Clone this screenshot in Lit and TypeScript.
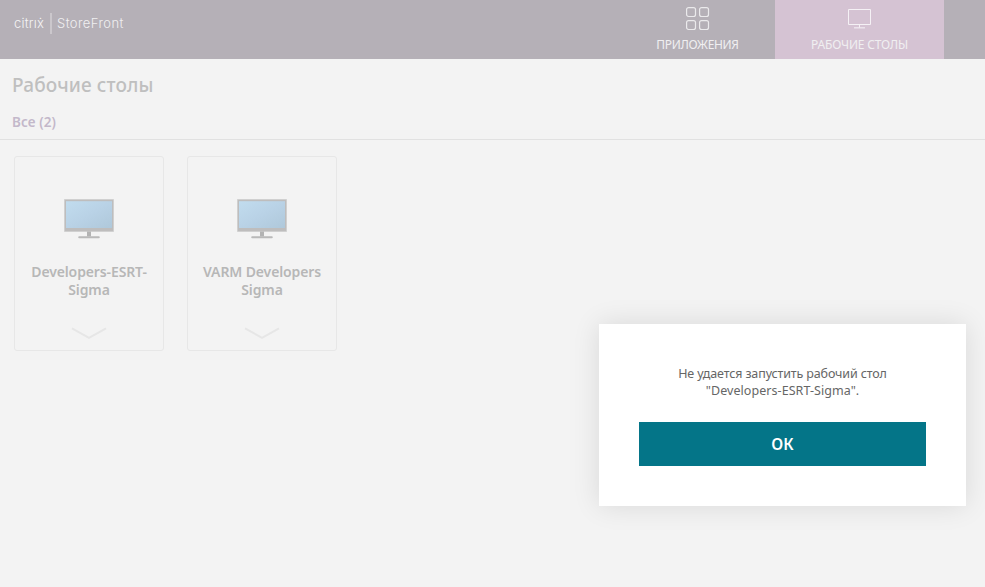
import { LitElement, html, css, svg } from "lit";
import { customElement, property } from "lit/decorators.js";

@customElement("desktop-card")
class DesktopCard extends LitElement {
  @property({ attribute: false }) lines: string[] = [];

  static styles = css`
    :host {
      display: flex;
      flex-direction: column;
      align-items: center;
      box-sizing: border-box;
      width: 150px;
      height: 195px;
      padding-top: 41px;
      border: 1px solid #e7e7e7;
      border-radius: 3px;
    }
    .monitor { display: block; width: 52px; height: 43px; }
    .name {
      margin-top: 22px;
      font: 600 14px/18px "Noto Sans", "Open Sans", sans-serif;
      letter-spacing: -0.12px;
      color: #b7b7b7;
      text-align: center;
      white-space: nowrap;
    }
    .chevron { display: block; margin-top: 28px; width: 36px; height: 12px; }
  `;

  render() {
    return html`
      <svg class="monitor" viewBox="0 0 52 43">
        <defs>
          <linearGradient id="screen" x1="0" y1="0" x2="1" y2="1">
            <stop offset="0" stop-color="#c1dcee" />
            <stop offset="0.5" stop-color="#b9d2e6" />
            <stop offset="1" stop-color="#afc8da" />
          </linearGradient>
        </defs>
        <rect x="1" y="1" width="50" height="33" rx="0.8" fill="#d0d0d0" />
        <rect x="2" y="2" width="48" height="31" fill="#bebdbd" />
        <rect x="3" y="3.2" width="46" height="26.8" fill="url(#screen)" />
        <rect x="24" y="33.5" width="4" height="5" fill="#b3b3b3" />
        <rect x="15.2" y="38.2" width="21.6" height="2.1" rx="1" fill="#b9b9b9" />
      </svg>
      <div class="name">${this.lines.map((l) => html`<div>${l}</div>`)}</div>
      <svg class="chevron" viewBox="0 0 36 12">
        <path d="M1 1.3 L18 10.8 L35 1.3" fill="none" stroke="#e6e6e6" stroke-width="1.9" />
      </svg>
    `;
  }
}

@customElement("app-root")
class AppRoot extends LitElement {
  static styles = css`
    :host {
      display: block;
      position: relative;
      width: 985px;
      height: 587px;
      overflow: hidden;
      background: #f3f3f3;
      font-family: "Noto Sans", "Open Sans", sans-serif;
    }
    header {
      display: flex;
      height: 59px;
      padding-right: 41px;
      background: #b5b0b7;
      color: #f0eff1;
    }
    .brand {
      display: flex;
      align-items: center;
      height: 20px;
      margin: 13px auto 0 14px;
      font: 300 13px/18px Inter, sans-serif;
      white-space: nowrap;
    }
    .citrix { width: 30px; letter-spacing: 0.2px; color: #f4f3f4; }
    .bar { width: 2px; height: 21px; margin: 0 5px 0 6px; background: #cbc7cc; }
    .product { letter-spacing: 0.42px; }
    .tab {
      display: flex;
      flex-direction: column;
      align-items: center;
      width: 155px;
      font-size: 12px;
      line-height: 16px;
      white-space: nowrap;
    }
    .tab.active { width: 169px; background: #d5c3d3; }
    .tab svg { display: block; width: 26px; height: 26px; margin: 6px 0 5px; }
    .apps span { letter-spacing: -0.32px; }
    .active span { letter-spacing: -0.2px; }
    .active svg { align-self: flex-start; margin-left: 71px; }
    h1 {
      margin: 0;
      padding: 13px 12px 0;
      font-size: 19px;
      line-height: 26px;
      font-weight: 500;
      color: #bfbfbf;
      letter-spacing: 0.12px;
    }
    .filter {
      height: 26px;
      padding: 15px 12px 0;
      border-bottom: 1px solid #e1e1e1;
      font-size: 13.5px;
      line-height: 19px;
      font-weight: 650;
      color: #c3b8ca;
      letter-spacing: 0.1px;
    }
    .cards { display: flex; gap: 23px; padding: 16px 14px; }
    .dialog {
      position: absolute;
      left: 599px;
      top: 324px;
      box-sizing: border-box;
      width: 367px;
      height: 182px;
      padding: 41px 40px 40px;
      background: #fff;
      box-shadow: 0 0 26px rgba(0, 0, 0, 0.11);
      text-align: center;
      color: #666;
      font-size: 12.5px;
      line-height: 17px;
    }
    .message { margin: 0 0 23px; white-space: nowrap; }
    .message .subject { letter-spacing: -0.13px; }
    .message .target { letter-spacing: 0.06px; }
    button {
      display: block;
      width: 287px;
      height: 44px;
      padding: 0;
      border: 0;
      background: #047588;
      color: #fff;
      font: 600 15.5px/44px "Noto Sans", "Open Sans", sans-serif;
    }
  `;

  render() {
    return html`
      <header>
        <div class="brand">
          <span class="citrix">citrıẋ</span><span class="bar"></span><span class="product">StoreFront</span>
        </div>
        <div class="tab apps">
          <svg viewBox="0 0 26 26" fill="none" stroke="#ebeaec" stroke-width="1.2">
            ${[1.6, 14.6].map((y) => [1.6, 14.6].map((x) => svg`<rect x=${x} y=${y} width="8.9" height="8.9" rx="2" />`))}
          </svg>
          <span>ПРИЛОЖЕНИЯ</span>
        </div>
        <div class="tab active">
          <svg viewBox="0 0 26 26" fill="none" stroke="#f5f1f5" stroke-width="1" overflow="visible">
            <path d="M2.5 3.5 H24.5 V18.5 H2.5 Z M13.5 18.5 V21.5" />
            <path d="M8 21.8 H19" stroke-width="1.4" stroke-opacity="0.75" />
          </svg>
          <span>РАБОЧИЕ СТОЛЫ</span>
        </div>
      </header>
      <h1>Рабочие столы</h1>
      <div class="filter">Все (2)</div>
      <div class="cards">
        <desktop-card .lines=${["Developers-ESRT-", "Sigma"]}></desktop-card>
        <desktop-card .lines=${["VARM Developers", "Sigma"]}></desktop-card>
      </div>
      <div class="dialog" role="alertdialog">
        <p class="message"><span class="subject">Не удается запустить рабочий стол</span><br /><span class="target">"Developers-ESRT-Sigma".</span></p>
        <button>ОК</button>
      </div>
    `;
  }
}
